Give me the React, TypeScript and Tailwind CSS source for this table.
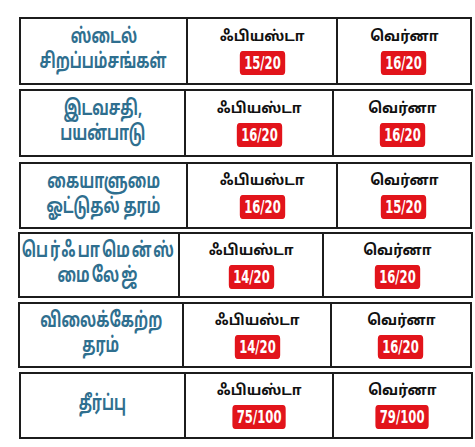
const rows = [
  {
    box: "mt-[17px] ml-[19px] w-[453px] h-[68px]",
    c1: "w-[167px]",
    c2: "w-[150px]",
    label: ["ஸ்டைல்", "சிறப்பம்சங்கள்"],
    a: "15/20",
    b: "16/20",
  },
  {
    box: "mt-[4px] ml-[19px] w-[454px] h-[68px]",
    c1: "w-[165px]",
    c2: "w-[148px]",
    label: ["இடவசதி,", "பயன்பாடு"],
    a: "16/20",
    b: "16/20",
  },
  {
    box: "mt-[5px] ml-[19px] w-[453px] h-[67px]",
    c1: "w-[167px]",
    c2: "w-[150px]",
    label: ["கையாளுமை", "ஓட்டுதல் தரம்"],
    a: "16/20",
    b: "15/20",
  },
  {
    box: "mt-[3px] ml-[18px] w-[455px] h-[66px]",
    c1: "w-[160px]",
    c2: "w-[144px]",
    label: ["பெர்ஃபாமென்ஸ்", "மைலேஜ்"],
    a: "14/20",
    b: "16/20",
    wide: true,
  },
  {
    box: "mt-[4px] ml-[18px] w-[454px] h-[66px]",
    c1: "w-[164px]",
    c2: "w-[148px]",
    label: ["விலைக்கேற்ற", "தரம்"],
    a: "14/20",
    b: "16/20",
  },
  {
    box: "mt-[4px] ml-[19px] w-[454px] h-[67px]",
    c1: "w-[165px]",
    c2: "w-[148px]",
    label: ["தீர்ப்பு"],
    a: "75/100",
    b: "79/100",
  },
];

const tamil = "font-['Noto_Sans_Tamil','Lohit_Tamil','Noto_Sans',sans-serif]";

function Score({ name, value }: { name: string; value: string }) {
  return (
    <div className="flex flex-col items-center gap-[3px]">
      <div className={`${tamil} scale-x-[0.94] text-[15px] font-bold leading-[20px] text-[#111]`}>{name}</div>
      <div className="scale-x-[0.72] rounded-[4px] bg-[#e2141b] px-[6px] font-['DejaVu_Sans_Condensed','Liberation_Sans_Narrow',sans-serif] text-[18px] font-bold leading-[24px] text-white">
        {value}
      </div>
    </div>
  );
}

export default function App() {
  return (
    <div className="h-[447px] w-[475px] bg-white">
      {rows.map((r, i) => (
        <div key={i} className={`${r.box} flex border-2 border-[#1c1c1c]`}>
          <div
            className={`${r.c1} flex shrink-0 flex-col items-center justify-center border-r-2 border-[#1c1c1c] ${tamil} text-[21px] leading-[25px] font-bold text-[#2f6f8f]`}
          >
            {r.label.map((l) => (
              <div key={l} className={`whitespace-nowrap scale-x-[0.69] ${r.wide ? "tracking-[3px]" : ""}`}>
                {l}
              </div>
            ))}
          </div>
          <div className={`${r.c2} flex shrink-0 items-center justify-center border-r-2 border-[#1c1c1c]`}>
            <Score name="ஃபியஸ்டா" value={r.a} />
          </div>
          <div className="flex flex-1 items-center justify-center">
            <Score name="வெர்னா" value={r.b} />
          </div>
        </div>
      ))}
    </div>
  );
}
